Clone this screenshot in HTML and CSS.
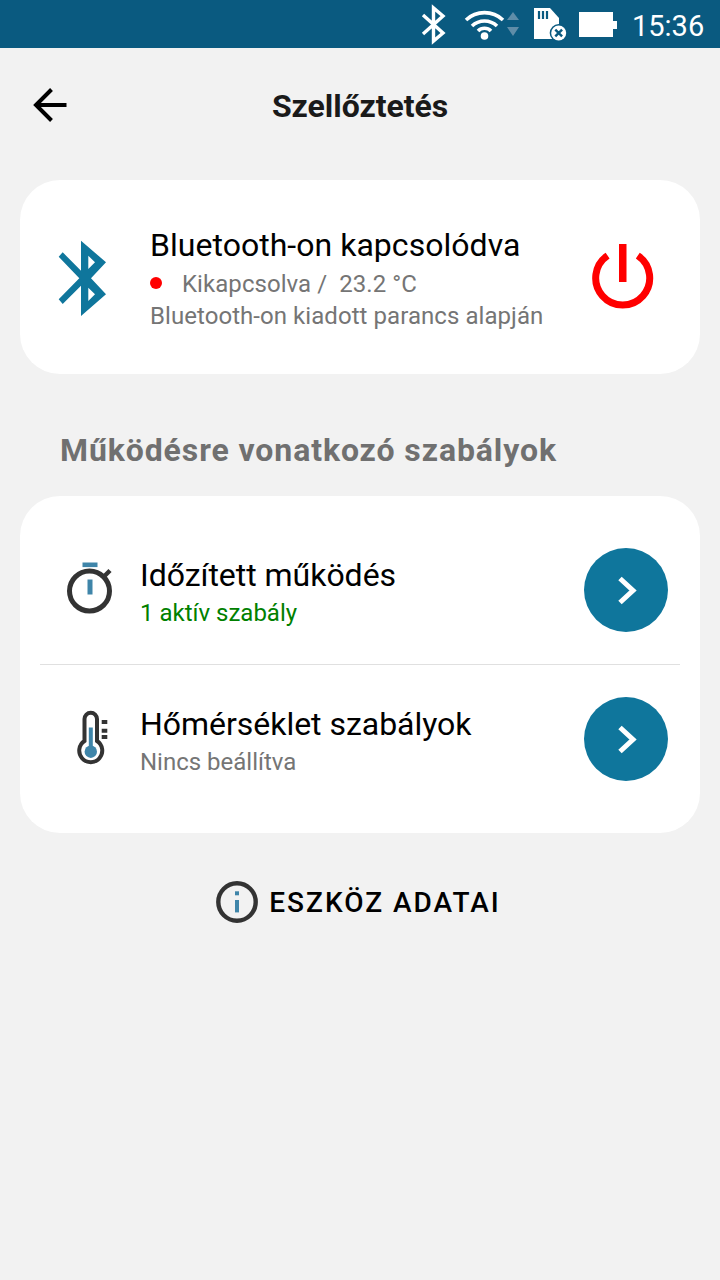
FILE: index.html
```html
<!DOCTYPE html>
<html lang="hu">
<head>
  <meta charset="UTF-8">
  <title>Szellőztetés</title>
  <link rel="stylesheet" href="styles.css">
</head>
<body>
  <div class="statusbar">
    <svg class="st-bt" viewBox="420 0 28 48"><path d="M423 15 L443 33 L433.5 41 V8 L443 16 L423 34" fill="none" stroke="#fff" stroke-width="3.4"/></svg>
    <svg class="st-wifi" viewBox="464 0 42 48">
      <path d="M466 20 A27 27 0 0 1 503 20 M472 26 A18 18 0 0 1 497 26 M478 31 A9 9 0 0 1 491 31" fill="none" stroke="#fff" stroke-width="3.6"/>
      <circle cx="484.5" cy="36" r="3.8" fill="#fff"/>
    </svg>
    <svg class="st-arrows" viewBox="506 0 14 48"><path d="M513 12 L519 20 H507 Z M507 27 H519 L513 36 Z" fill="#5f8da8"/></svg>
    <svg class="st-sd" viewBox="532 0 36 48">
      <path d="M534 8 H550 L559 18 V39 H534 Z" fill="#fff"/>
      <path d="M539 11 V19 M543 11 V19 M547 11 V19" stroke="#0a5a80" stroke-width="2.2"/>
      <circle cx="558.7" cy="33" r="9" fill="#0a5a80"/>
      <circle cx="558.7" cy="33" r="7.5" fill="#fff"/>
      <path d="M555.3 29.6 L562.1 36.4 M562.1 29.6 L555.3 36.4" stroke="#0a5a80" stroke-width="2.4"/>
    </svg>
    <svg class="st-batt" viewBox="578 0 40 48"><path d="M579 12 H613 V21 H617 V29 H613 V37 H579 Z" fill="#fff"/></svg>
    <span class="st-time">15:36</span>
  </div>

  <div class="header">
    <svg class="back" viewBox="30 85 40 40"><path d="M66.5 105 H37 M51.5 89.5 L36 105 L51.5 120.5" fill="none" stroke="#000" stroke-width="4"/></svg>
    <div class="title">Szellőztetés</div>
  </div>

  <div class="card device">
    <svg class="bt-icon" viewBox="50 235 60 86"><path fill-rule="evenodd" fill="#0f769c" d="M81 240.7 L106 262.3 L91 278.3 L106 294.3 L81 316 V285.7 L62.7 304 L58.7 299.3 L79.3 278.3 L58.7 256.7 L62.7 252.3 L81 270.7 Z M88.3 255.7 V269 L95 262.3 Z M88.3 287.7 V301 L95 294.3 Z"/></svg>
    <div class="device-text">
      <div class="device-name">Bluetooth-on kapcsolódva</div>
      <div class="device-state"><span class="dot"></span>Kikapcsolva /&nbsp; 23.2 °C</div>
      <div class="device-note">Bluetooth-on kiadott parancs alapján</div>
    </div>
    <svg class="power" viewBox="590 240 66 76">
      <path d="M607.6 255.6 A27 27 0 1 0 637.8 255.6" fill="none" stroke="#f00" stroke-width="7"/>
      <rect x="619" y="244" width="7.5" height="38" fill="#f00"/>
    </svg>
  </div>

  <div class="section-title">Működésre vonatkozó szabályok</div>

  <div class="card rules">
    <div class="rule">
      <svg class="rule-icon" viewBox="60 555 60 70">
        <circle cx="89.5" cy="591" r="20" fill="none" stroke="#333" stroke-width="5"/>
        <path d="M104 576.5 L110 570.5" stroke="#333" stroke-width="4.5"/>
        <rect x="82.5" y="562.5" width="15" height="4.6" fill="#3f85a9"/>
        <rect x="87.5" y="579.5" width="5" height="15" fill="#3f85a9"/>
      </svg>
      <div class="rule-text">
        <div class="rule-name">Időzített működés</div>
        <div class="rule-sub active">1 aktív szabály</div>
      </div>
      <button class="go"><svg viewBox="0 0 24 36"><path d="M6 6.5 L19 18.5 L6 30.5" fill="none" stroke="#fff" stroke-width="5"/></svg></button>
    </div>
    <div class="rule">
      <svg class="rule-icon" viewBox="60 704 60 70">
        <path d="M84.5 741 V719 A6.25 6.25 0 0 1 97 719 V741 A11.5 11.5 0 1 1 84.5 741 Z" fill="none" stroke="#333" stroke-width="4"/>
        <rect x="88.8" y="727.5" width="4" height="20" fill="#3f85a9"/>
        <circle cx="90.8" cy="751.7" r="6.2" fill="#3f85a9"/>
        <path d="M101.7 722 H107.3 M101.7 730.7 H107.3 M101.7 737 H107.3" stroke="#333" stroke-width="4"/>
      </svg>
      <div class="rule-text">
        <div class="rule-name">Hőmérséklet szabályok</div>
        <div class="rule-sub">Nincs beállítva</div>
      </div>
      <button class="go"><svg viewBox="0 0 24 36"><path d="M6 6.5 L19 18.5 L6 30.5" fill="none" stroke="#fff" stroke-width="5"/></svg></button>
    </div>
  </div>

  <div class="device-info">
    <svg class="info-icon" viewBox="215 880 44 44">
      <circle cx="237" cy="902" r="18.7" fill="none" stroke="#333" stroke-width="4.4"/>
      <rect x="235" y="891.3" width="4" height="4" fill="#3f85a9"/>
      <rect x="235" y="900" width="4" height="12.4" fill="#3f85a9"/>
    </svg>
    <span>ESZKÖZ ADATAI</span>
  </div>
</body>
</html>
```

FILE: styles.css
```css
body {
  margin: 0;
  width: 720px;
  height: 1280px;
  overflow: hidden;
  background: #f2f2f2;
  font-family: Roboto, sans-serif;
  color: #000;
}

.statusbar {
  height: 48px;
  background: #0a5a80;
  display: flex;
  justify-content: flex-end;
  padding-right: 18px;
  color: #fff;
}

.statusbar svg {
  height: 48px;
  display: block;
}

.st-bt { width: 28px; margin-right: 16px; }
.st-wifi { width: 42px; }
.st-arrows { width: 14px; margin-right: 12px; }
.st-sd { width: 36px; margin-right: 10px; }
.st-batt { width: 40px; margin-right: 14px; }

.st-time {
  width: 70px;
  font-size: 29px;
  line-height: 52px;
  white-space: nowrap;
}

.header {
  height: 116px;
  position: relative;
  display: flex;
  align-items: center;
  justify-content: center;
}

.back {
  position: absolute;
  left: 30px;
  top: 37px;
  width: 40px;
  height: 40px;
}

.title {
  font-size: 32px;
  font-weight: 700;
  letter-spacing: -0.05px;
  color: #1a1a1a;
}

.card {
  margin: 0 20px;
  background: #fff;
  border-radius: 40px;
}

.device {
  height: 194px;
  margin-top: 16px;
  display: flex;
  align-items: center;
  padding-left: 30px;
  box-sizing: border-box;
}

.bt-icon {
  width: 60px;
  height: 86px;
  margin-top: 2px;
  margin-right: 40px;
}

.device-text {
  flex: 1;
}

.device-name {
  font-size: 32px;
  line-height: 46px;
  letter-spacing: 0.03px;
}

.device-state,
.device-note {
  font-size: 24px;
  line-height: 32px;
  letter-spacing: 0.06px;
  color: #757575;
}

.dot {
  display: inline-block;
  width: 12px;
  height: 12px;
  border-radius: 50%;
  background: #f00;
  margin-right: 20px;
  vertical-align: 3px;
}

.power {
  width: 66px;
  height: 76px;
  margin-top: 2px;
  margin-right: 44px;
}

.section-title {
  margin: 58px 0 28px 60px;
  font-size: 32px;
  line-height: 36px;
  font-weight: 700;
  letter-spacing: 0.9px;
  color: #707070;
}

.rules {
  height: 337px;
  padding: 20px 20px;
  box-sizing: border-box;
}

.rule {
  height: 148px;
  display: flex;
  align-items: center;
}

.rule + .rule {
  border-top: 1px solid #e0e0e0;
}

.rule-icon {
  width: 60px;
  height: 70px;
  margin-left: 20px;
  margin-right: 20px;
}

.rule-text {
  flex: 1;
  padding-top: 4px;
}

.rule-name {
  font-size: 32px;
  line-height: 42px;
  letter-spacing: -0.03px;
}

.rule-sub {
  font-size: 24px;
  line-height: 34px;
  color: #757575;
}

.rule-sub.active {
  color: #008000;
}

.go {
  width: 84px;
  height: 84px;
  margin-right: 12px;
  padding: 0;
  border: none;
  border-radius: 50%;
  background: #0f769c;
  display: flex;
  align-items: center;
  justify-content: center;
}

.go svg {
  width: 24px;
  height: 36px;
}

.device-info {
  margin-top: 47px;
  padding-right: 4px;
  display: flex;
  align-items: center;
  justify-content: center;
  gap: 10px;
  font-size: 28px;
  font-weight: 500;
  letter-spacing: 2px;
}

.info-icon {
  width: 44px;
  height: 44px;
}
```
